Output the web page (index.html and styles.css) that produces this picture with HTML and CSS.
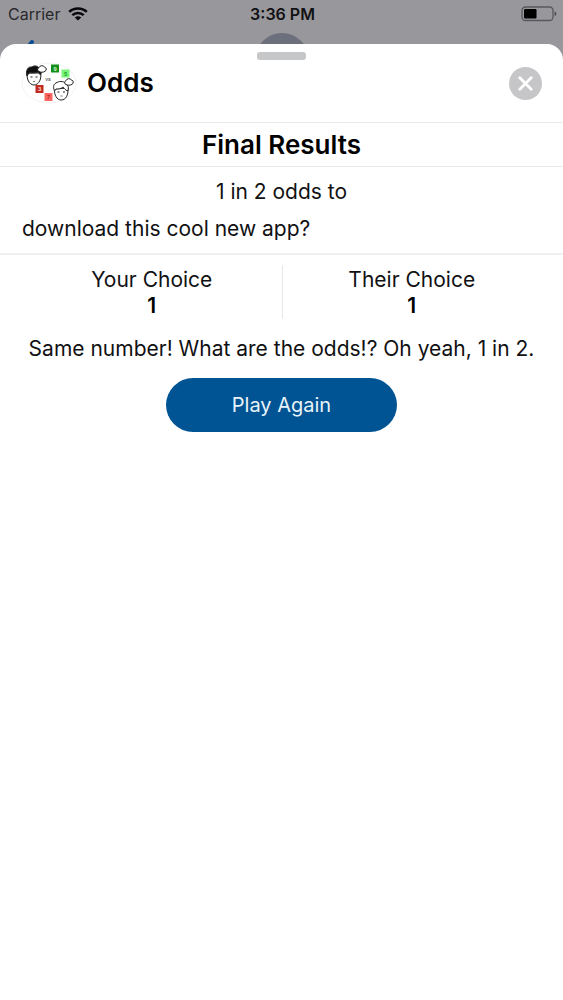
FILE: index.html
```html
<!DOCTYPE html>
<html lang="en">
<head>
<meta charset="utf-8">
<meta name="viewport" content="width=device-width, initial-scale=1">
<title>Odds</title>
<link rel="stylesheet" href="styles.css">
</head>
<body>
<div class="backdrop">
  <div class="status">
    <div class="carrier">
      <span>Carrier</span>
      <svg class="wifi" viewBox="0 0 20 14" aria-hidden="true">
        <path d="M1.200 4.900C6 .4 14 .4 18.800 4.900" fill="none" stroke="#08080a" stroke-width="2.500"/>
        <path d="M4.300 8.200C7.500 5.200 12.500 5.200 15.700 8.200" fill="none" stroke="#08080a" stroke-width="2.400"/>
        <path d="M10 13.600 6.800 10.500C8.600 8.900 11.400 8.900 13.200 10.500Z" fill="#08080a"/>
      </svg>
    </div>
    <time class="clock">3:36 PM</time>
    <svg class="battery" viewBox="0 0 36 16" aria-hidden="true">
      <rect x="1" y="1" width="31" height="13.500" rx="3.500" fill="none" stroke="#58585c" stroke-width="1.300"/>
      <rect x="3" y="3" width="12.500" height="9.500" rx="1.200" fill="#000"/>
      <path d="M33.600 5.300Q35.400 6 35.400 7.800T33.600 10.300Z" fill="#4c4c50"/>
    </svg>
  </div>
  <svg class="back" viewBox="0 0 16 28" aria-hidden="true"><path d="M13 2 3 14 13 26" fill="none" stroke="#0b4f96" stroke-width="4" stroke-linecap="round"/></svg>
  <div class="avatar"></div>
</div>
<main class="sheet">
  <div class="grabber"></div>
  <header class="header">
    <svg class="logo" viewBox="0 0 56 42" aria-hidden="true">
      <ellipse cx="28" cy="21" rx="27" ry="20" fill="#fff" stroke="#ececec" stroke-width=".7"/>
      <g stroke="#222" stroke-width="1" fill="#fff" stroke-linejoin="round">
        <path d="M6.500 11C5 16 8 23 13 23C18 23 21 16 19.500 11Z"/>
        <path d="M6 14C4.500 8 7 4.500 11 5C13 3 18 4 18.500 7C20.500 8 20.500 11 19.500 13C18.500 12 18 11 17 10C13 11.500 10 10.500 8 11Z" fill="#111"/>
        <path d="M18 9.500A2 2 0 0 1 17.800 5.800A3.300 3.300 0 0 1 23.500 5A2.300 2.300 0 0 1 24 9.300C22.500 10.500 19.500 10.500 18 9.500Z"/>
        <path d="M33.500 27C33 33 36 38 40 38C45 38 47.500 33 47 26Z"/>
        <path d="M33.500 29C31.500 24 33 21.500 36 20.500C39 18.500 44 19.500 46 22.500C48 25 47.500 27 46.500 29C44.500 28 43 26.500 42 25C40 27 37 27 35 27Z"/>
        <path d="M45 22.500A2 2 0 0 1 44.800 18.800A3.300 3.300 0 0 1 50.500 18A2.300 2.300 0 0 1 51 22.300C49.500 23.500 46.500 23.500 45 22.500Z"/>
        <path d="M9.500 15h2M14.500 15h2M36.500 30h2M42 30h2" fill="none"/>
        <path d="M12 19.500h2M39.500 34h2" fill="none" stroke-width=".6"/>
      </g>
      <path d="M30 2.500h8v8h-8z" fill="#139019"/>
      <path d="M40.500 7.500h8v8h-8z" fill="#76f578"/>
      <path d="M14.500 23h8v8h-8z" fill="#c22a20"/>
      <path d="M23.500 31h8v8h-8z" fill="#fa6763"/>
      <g font-family="Inter, sans-serif" font-weight="700" text-anchor="middle" font-size="5">
        <text x="34" y="8.500" fill="#d7f2d7">9</text>
        <text x="44.500" y="13.500" fill="#249b2a">5</text>
        <text x="18.500" y="29" fill="#ffe1dc">3</text>
        <text x="27.500" y="37" fill="#b82621">7</text>
        <text x="27" y="19" fill="#444" font-weight="500">vs</text>
      </g>
    </svg>
    <h1 class="app-name">Odds</h1>
    <button class="close" type="button" aria-label="Close">
      <svg viewBox="0 0 14 14" aria-hidden="true"><path d="M1.700 1.700 12.300 12.300M12.300 1.700 1.700 12.300" stroke="#fff" stroke-width="2.600" stroke-linecap="round"/></svg>
    </button>
  </header>
  <h2 class="title">Final Results</h2>
  <section class="challenge">
    <p class="odds">1 in 2 odds to</p>
    <p class="dare">download this cool new app?</p>
  </section>
  <section class="choices">
    <div class="choice"><span>Your Choice</span><strong>1</strong></div>
    <div class="choice"><span>Their Choice</span><strong>1</strong></div>
  </section>
  <p class="outcome">Same number! What are the odds!? Oh yeah, 1 in 2.</p>
  <button class="play" type="button">Play Again</button>
</main>
</body>
</html>
```
FILE: styles.css
```css
* {
  box-sizing: border-box;
}

body {
  margin: 0;
  min-height: 100vh;
  display: flex;
  flex-direction: column;
  background: #98979c;
  color: #111113;
  font-family: Inter, "Liberation Sans", sans-serif;
  font-size: 21px;
  line-height: 26px;
}

h1, h2, p {
  margin: 0;
}

button {
  border: 0;
  padding: 0;
  font: inherit;
  cursor: pointer;
}

.backdrop {
  position: relative;
  height: 44px;
  overflow: hidden;
}

.status {
  display: grid;
  grid-template-columns: 1fr auto 1fr;
  align-items: center;
  height: 28px;
  padding: 0 6px 0 8px;
  font-size: 16px;
  line-height: 28px;
}

.carrier {
  display: flex;
  align-items: center;
  gap: 8px;
  color: #29292c;
}

.wifi {
  width: 20px;
  height: 14px;
}

.clock {
  font-weight: 600;
}

.battery {
  width: 36px;
  height: 16px;
  justify-self: end;
}

.back {
  position: absolute;
  left: 19px;
  top: 40px;
  width: 16px;
  height: 28px;
}

.avatar {
  position: absolute;
  left: 50%;
  top: 33px;
  width: 54px;
  height: 54px;
  margin-left: -27px;
  border-radius: 50%;
  background: #6c6f7c;
}

.sheet {
  flex: 1;
  display: flex;
  flex-direction: column;
  padding-top: 8px;
  border-radius: 16px 16px 0 0;
  background: #fff;
}

.grabber {
  align-self: center;
  width: 49px;
  height: 8px;
  border-radius: 3px;
  background: #c5c7c8;
}

.header {
  display: flex;
  align-items: center;
  padding: 2px 21px 18px;
  border-bottom: 1px solid #e9e9eb;
}

.logo {
  width: 56px;
  height: 42px;
}

.app-name {
  flex: 1;
  padding-left: 10px;
  color: #000;
  font-size: 26px;
  font-weight: 600;
  line-height: 42px;
}

.close {
  display: flex;
  align-items: center;
  justify-content: center;
  width: 33px;
  height: 33px;
  border-radius: 50%;
  background: #c6c6c9;
}

.close svg {
  width: 15px;
  height: 15px;
}

.title {
  border-bottom: 1px solid #e9e9eb;
  color: #000;
  font-size: 26px;
  font-weight: 600;
  line-height: 43px;
  text-align: center;
}

.challenge {
  display: flex;
  flex-direction: column;
  gap: 11px;
  padding: 12px 22px 11px;
  border-bottom: 2px solid #f0f0f2;
}

.odds {
  text-align: center;
}

.choices {
  display: grid;
  grid-template-columns: 1fr 1fr;
  padding: 10px 22px 0;
}

.choice {
  display: flex;
  flex-direction: column;
  align-items: center;
  padding-top: 2px;
}

.choice + .choice {
  border-left: 1px solid #e6e6e8;
}

.choice strong {
  color: #000;
  font-weight: 600;
}

.outcome {
  padding: 17px 16px 16px;
  text-align: center;
}

.play {
  align-self: center;
  width: 41%;
  border-radius: 27px;
  background: #005493;
  color: #e9f3fa;
  font-size: 20px;
  line-height: 54px;
}
```
